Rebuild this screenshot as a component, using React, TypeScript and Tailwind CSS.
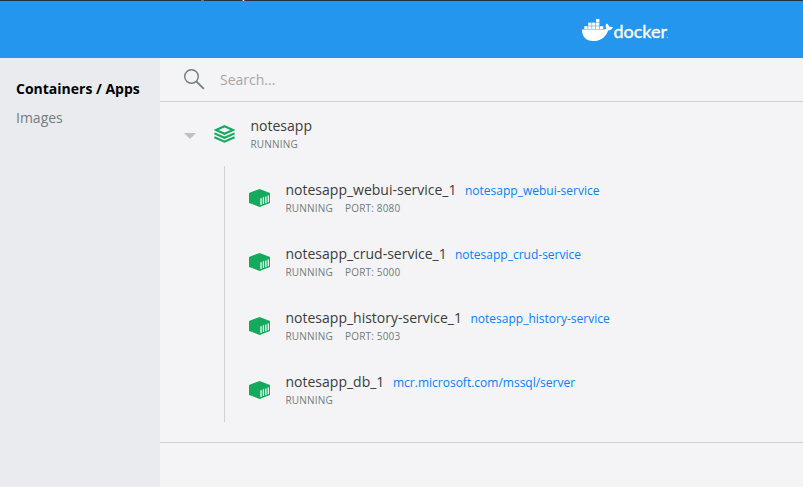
import React from "react";

type Service = { name: string; image: string; port?: number; nameWidth: string };

const services: Service[] = [
  { name: "notesapp_webui-service_1", image: "notesapp_webui-service", port: 8080, nameWidth: "w-[171px]" },
  { name: "notesapp_crud-service_1", image: "notesapp_crud-service", port: 5000, nameWidth: "w-[161px]" },
  { name: "notesapp_history-service_1", image: "notesapp_history-service", port: 5003, nameWidth: "w-[176.5px]" },
  { name: "notesapp_db_1", image: "mcr.microsoft.com/mssql/server", nameWidth: "w-[99px]" },
];

function DockerLogo() {
  return (
    <svg width="88" height="24" viewBox="0 0 88 24" fill="#fff" aria-label="docker">
      <g>
        <rect x="14" y="2" width="3.4" height="3.2" />
        <rect x="6.2" y="5.6" width="3.4" height="3.1" />
        <rect x="10.1" y="5.6" width="3.4" height="3.1" />
        <rect x="14" y="5.6" width="3.4" height="3.1" />
        <rect x="2.3" y="9.2" width="3.4" height="3" />
        <rect x="6.2" y="9.2" width="3.4" height="3" />
        <rect x="10.1" y="9.2" width="3.4" height="3" />
        <rect x="14" y="9.2" width="3.4" height="3" />
        <rect x="17.9" y="9.2" width="3.4" height="3" />
      </g>
      <path d="M0 12.6H21.4C22.6 12.6 23.7 12.3 24.4 11.8C23.3 10 23.3 8.3 24.6 6.6C26 7.5 26.9 8.5 27.2 9.8C28.6 9.5 30 9.7 31 10.3C30.2 12.4 28.5 13.4 26.2 13.4C23.6 20.5 18.3 24 11.1 24C3.9 24 0 20 0 12.6Z" />
      <text
        x="31.5"
        y="21"
        fontFamily="Lato, sans-serif"
        fontSize="17"
        fontWeight="400"
        stroke="#fff"
        strokeWidth="0.35"
        strokeLinejoin="round"
        textLength="53.5"
        lengthAdjust="spacingAndGlyphs"
      >
        docker
      </text>
      <circle cx="85.4" cy="20.3" r="0.6" opacity="0.6" />
    </svg>
  );
}

function StackIcon() {
  return (
    <svg className="ml-[18px] shrink-0" width="21" height="18" viewBox="0 0 21 18" fill="none" stroke="#13aa5e" strokeWidth="2.1">
      <path d="M10.5 1.2L19 5L10.5 8.8L2 5Z" />
      <path d="M.4 8.4L10.5 12.8L20.6 8.4M.4 12.3L10.5 16.7L20.6 12.3" />
    </svg>
  );
}

function ContainerIcon() {
  return (
    <svg className="ml-6 shrink-0" width="21" height="18" viewBox="0 0 21 18">
      <path fill="#13aa5e" d="M10.6 0L21 3.9V13.9L10.6 18L0 13.9V3.9Z" />
      <path stroke="#f4f4f6" strokeWidth="1.3" fill="none" d="M12 9.2V16M14.4 8.3V15.1M16.9 7.4V14.2M19.3 6.5V13.2" />
    </svg>
  );
}

function Status({ port }: { port?: number }) {
  return (
    <div className="mt-[2px] flex h-3.5 gap-3 text-[10px] leading-3.5 text-[#727a80]">
      <span className="w-[47.5px] tracking-[0.18px] whitespace-nowrap">RUNNING</span>
      {port && <span className="tracking-[0.18px]">PORT: {port}</span>}
    </div>
  );
}

export default function App() {
  return (
    <div className="flex h-[487px] w-[803px] flex-col overflow-hidden bg-[#f4f4f6] font-['Open_Sans',sans-serif]">
      <div className="flex h-px shrink-0 bg-[#24313c]">
        <span className="ml-[201px] w-[3px] bg-[#66785b]" />
        <span className="ml-[38px] w-px bg-[#3d8ed0]" />
        <span className="w-px bg-white" />
        <span className="w-px bg-[#c65349]" />
      </div>
      <header className="flex h-[57px] shrink-0 bg-[#2496ed] pt-[15.5px] pl-[582px]">
        <DockerLogo />
      </header>
      <div className="flex min-h-0 flex-1">
        <nav className="flex w-40 shrink-0 flex-col gap-[9px] bg-[#e9ebee] pt-[21px] pl-4 text-sm leading-5">
          <a className="font-bold text-black">Containers / Apps</a>
          <a className="text-[#777b80]">Images</a>
        </nav>
        <main className="min-w-0 flex-1">
          <div className="flex h-11 items-center border-b border-[#d1d2d6] pl-6">
            <svg width="21" height="21" viewBox="0 0 21 21" fill="none" stroke="#717b82" strokeWidth="1.4">
              <circle cx="7.5" cy="7.5" r="6.8" />
              <path d="M12.3 12.3L19.8 19.8" strokeWidth="1.8" />
            </svg>
            <span className="ml-[15px] text-sm text-[#a4a6a9]">Search...</span>
          </div>
          <section className="border-b border-[#d1d2d6] pb-5">
            <div className="flex h-16 items-center pl-6">
              <svg className="mt-1 shrink-0" width="12" height="6" viewBox="0 0 12 6">
                <path fill="#bec0c1" d="M0 0H12L6 6Z" />
              </svg>
              <StackIcon />
              <div className="ml-[15.5px] pb-px">
                <div className="text-sm leading-[19px] text-[#3b3d40]">notesapp</div>
                <Status />
              </div>
            </div>
            <div className="ml-16 border-l border-[#d1d2d6]">
              {services.map((s) => (
                <div key={s.name} className="flex h-16 items-center">
                  <ContainerIcon />
                  <div className="ml-[15.5px] pb-px">
                    <div className="flex h-[19px] items-start gap-[8.5px]">
                      <span className={`${s.nameWidth} text-sm leading-[19px] whitespace-nowrap text-[#3b3d40]`}>{s.name}</span>
                      <a className="pt-px text-xs leading-[19px] text-[#087fff]">{s.image}</a>
                    </div>
                    <Status port={s.port} />
                  </div>
                </div>
              ))}
            </div>
          </section>
        </main>
      </div>
    </div>
  );
}
